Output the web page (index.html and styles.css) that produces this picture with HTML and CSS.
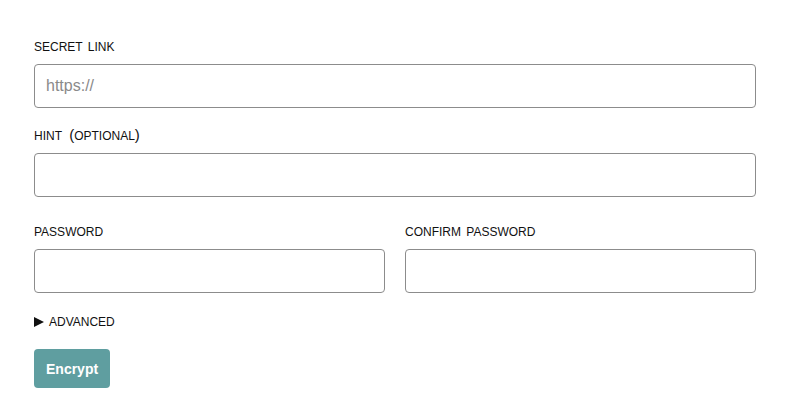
FILE: index.html
```html
<!doctype html>

<html>
  <head>
    <title>Encrypt a link</title>
    <link rel="stylesheet" href="styles.css">
  </head>

  <body>
    <form class="encrypt-form">
      <div class="field">
        <label class="field-label" for="link">SECRET LINK</label>
        <input class="field-input" id="link" type="text" placeholder="https://">
      </div>

      <div class="field">
        <label class="field-label" for="hint">HINT <span class="optional"><span class="paren">(</span>OPTIONAL<span class="paren">)</span></span></label>
        <input class="field-input" id="hint" type="text">
      </div>

      <div class="field-row">
        <div class="field">
          <label class="field-label" for="password">PASSWORD</label>
          <input class="field-input" id="password" type="password">
        </div>
        <div class="field">
          <label class="field-label" for="confirm">CONFIRM PASSWORD</label>
          <input class="field-input" id="confirm" type="password">
        </div>
      </div>

      <details class="advanced">
        <summary>ADVANCED</summary>
      </details>

      <button class="encrypt-button" type="submit">Encrypt</button>
    </form>
  </body>
</html>
```

FILE: styles.css
```css
* { margin: 0; padding: 0; box-sizing: border-box; }
html, body {
  width: 100%;
  height: 100%;
  background: white;
  font-family: "Liberation Sans", Arial, sans-serif;
  color: #111;
}
body {
  padding: 40px 44px 0 34px;
}
.encrypt-form {
  display: flex;
  flex-direction: column;
  align-items: stretch;
}
.field {
  display: flex;
  flex-direction: column;
  margin-bottom: 21px;
}
.field-label {
  font-size: 12px;
  line-height: 14px;
  margin-bottom: 10px;
  word-spacing: 2px;
}
.optional { margin-left: 2px; }
.paren {
  font-size: 15px;
  line-height: 12px;
}
.field-input {
  height: 44px;
  border: 1px solid #8c8c8c;
  border-radius: 4px;
  padding: 0 11px;
  font-family: "Liberation Sans", Arial, sans-serif;
  font-size: 16px;
  color: #222;
  outline: none;
}
.field-input::placeholder { color: #8a8a8a; }
.field-row {
  display: grid;
  grid-template-columns: 1fr 1fr;
  column-gap: 20px;
  margin-top: 7px;
}
.field-row .field { margin-bottom: 22px; }
.advanced summary {
  list-style: none;
  display: flex;
  align-items: center;
  font-size: 12px;
  line-height: 14px;
  cursor: pointer;
}
.advanced summary::-webkit-details-marker { display: none; }
.advanced summary::before {
  content: "";
  width: 0;
  height: 0;
  border-left: 10px solid #111;
  border-top: 5px solid transparent;
  border-bottom: 5px solid transparent;
  margin-right: 5px;
}
.encrypt-button {
  align-self: flex-start;
  margin-top: 20px;
  height: 39px;
  padding: 0 12px;
  border: none;
  border-radius: 4px;
  background: #5f9ea0;
  color: white;
  font-family: "Liberation Sans", Arial, sans-serif;
  font-size: 14px;
  font-weight: bold;
  cursor: pointer;
}
```
